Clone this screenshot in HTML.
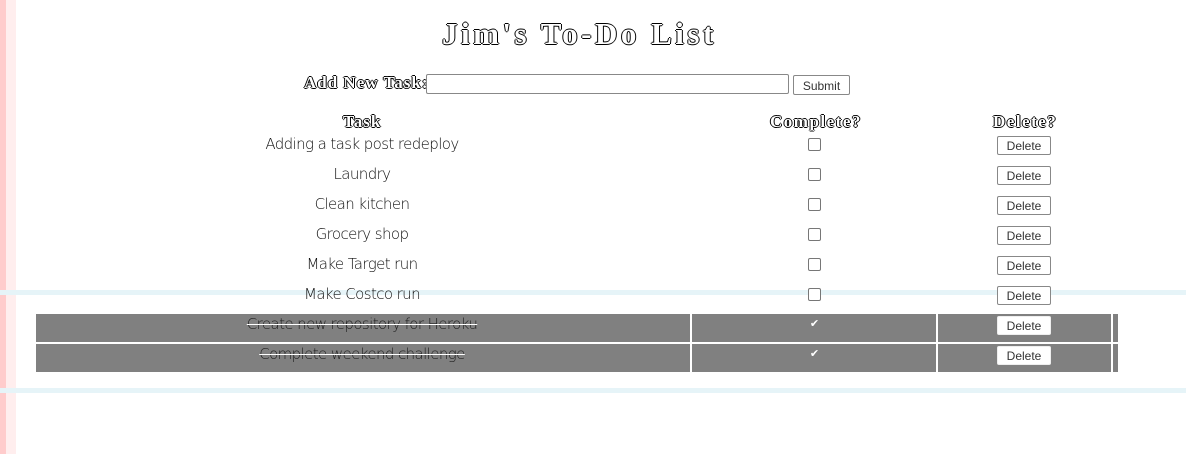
<!DOCTYPE html>
<html><head><meta charset="utf-8"><style>
body{margin:0;width:1186px;height:454px;position:relative;background:#fff;overflow:hidden;font-family:"Liberation Sans",sans-serif}
.red{position:absolute;top:0;bottom:0;width:3px;background:#fdd}
.blue{position:absolute;left:0;right:0;height:5px;background:#e6f4f8}
.out{color:#fff;text-shadow:-1px 0 #000,1px 0 #000,0 -1px #000,0 1px #000;font-family:"Liberation Serif",serif;font-weight:bold;position:absolute;white-space:nowrap}
.t{position:absolute;transform:translateX(-50%);color:#111;white-space:nowrap;letter-spacing:-0.6px;font-family:"DejaVu Sans",sans-serif;font-weight:200;font-size:15px}
.cb{position:absolute;width:11px;height:11px;border:1px solid #777;border-radius:2px;background:#fff;left:808px}
.btn{position:absolute;left:997px;width:54px;height:19px;border:1px solid #888;border-radius:2px;background:#fff;font-size:12px;color:#333;text-align:center;line-height:19px;box-sizing:border-box}
.g{position:absolute;background:#808080;height:28px}
</style></head><body>
<div class="red" style="left:0;width:6px;background:#fcc"></div>
<div class="red" style="left:6px;width:10px;background:#fee"></div>
<div class="blue" style="top:290px"></div>
<div class="blue" style="top:388px"></div>

<div class="out" style="left:442px;top:16px;font-size:31px;letter-spacing:3.5px">Jim's To-Do List</div>
<div class="out" style="left:304px;top:73px;font-size:17px;letter-spacing:1px">Add New Task:</div>
<div style="position:absolute;left:426px;top:74px;width:363px;height:20px;border:1px solid #888;border-radius:2px;box-sizing:border-box"></div>
<div class="btn" style="left:793px;top:75px;width:57px;height:20px;line-height:20px">Submit</div>
<div class="out" style="left:343px;top:112px;font-size:17px;letter-spacing:1px">Task</div>
<div class="out" style="left:770px;top:112px;font-size:17px;letter-spacing:1.5px">Complete?</div>
<div class="out" style="left:993px;top:112px;font-size:17px;letter-spacing:1.5px">Delete?</div>

<div class="g" style="left:36px;top:314px;width:654px"></div>
<div class="g" style="left:692px;top:314px;width:244px"></div>
<div class="g" style="left:938px;top:314px;width:173px"></div>
<div class="g" style="left:1113px;top:314px;width:5px"></div>
<div class="g" style="left:36px;top:344px;width:654px"></div>
<div class="g" style="left:692px;top:344px;width:244px"></div>
<div class="g" style="left:938px;top:344px;width:173px"></div>
<div class="g" style="left:1113px;top:344px;width:5px"></div>

<div class="t" style="left:362px;top:135px">Adding a task post redeploy</div>
<div class="t" style="left:362px;top:165px">Laundry</div>
<div class="t" style="left:362px;top:195px">Clean kitchen</div>
<div class="t" style="left:362px;top:225px">Grocery shop</div>
<div class="t" style="left:362px;top:255px">Make Target run</div>
<div class="t" style="left:362px;top:285px">Make Costco run</div>
<div class="t" style="left:362px;top:315px;color:#222;text-decoration:line-through;text-decoration-color:#fff">Create new repository for Heroku</div>
<div class="t" style="left:362px;top:345px;color:#222;text-decoration:line-through;text-decoration-color:#fff">Complete weekend challenge</div>

<div class="cb" style="top:138px"></div>
<div class="cb" style="top:168px"></div>
<div class="cb" style="top:198px"></div>
<div class="cb" style="top:228px"></div>
<div class="cb" style="top:258px"></div>
<div class="cb" style="top:288px"></div>
<div class="cb" style="top:318px;border-color:#808080;background:#808080;color:#fff;font-size:11px;line-height:11px;text-align:center">✔</div>
<div class="cb" style="top:348px;border-color:#808080;background:#808080;color:#fff;font-size:11px;line-height:11px;text-align:center">✔</div>

<div class="btn" style="top:136px">Delete</div>
<div class="btn" style="top:166px">Delete</div>
<div class="btn" style="top:196px">Delete</div>
<div class="btn" style="top:226px">Delete</div>
<div class="btn" style="top:256px">Delete</div>
<div class="btn" style="top:286px">Delete</div>
<div class="btn" style="top:316px;border-color:#eee">Delete</div>
<div class="btn" style="top:346px;border-color:#eee">Delete</div>
</body></html>
